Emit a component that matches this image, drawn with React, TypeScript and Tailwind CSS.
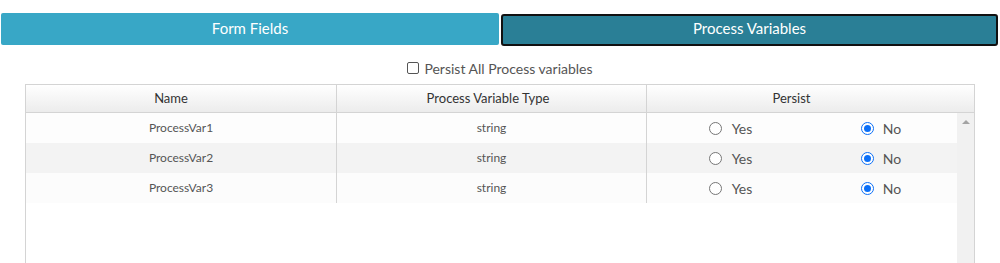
import { useState } from "react"

const rows = [
  { name: "ProcessVar1", type: "string" },
  { name: "ProcessVar2", type: "string" },
  { name: "ProcessVar3", type: "string" },
]

const rowBg = ["bg-[#fdfdfd]", "bg-[#f3f3f3]", "bg-[#fcfcfc]"]

function Radio({ checked }: { checked: boolean }) {
  return (
    <span
      className={
        checked
          ? "w-[13px] h-[13px] rounded-full border border-[#0b6ff7] bg-white flex items-center justify-center"
          : "w-[13px] h-[13px] rounded-full border border-[#767676] bg-white"
      }
    >
      {checked && <span className="w-[7px] h-[7px] rounded-full bg-[#0b6ff7]"></span>}
    </span>
  )
}

export default function App() {
  const [tab, setTab] = useState("vars")

  return (
    <div className="w-[1000px] h-[263px] bg-white overflow-hidden font-['Lato','Liberation_Sans',sans-serif]">
      {/* Tabs */}
      <div className="flex pt-[13px] gap-[2px] px-[1px]">
        <button
          onClick={() => setTab("fields")}
          className="w-[498px] h-[32px] pb-[1px] bg-[#38a7c6] text-white text-[15px] rounded-[2px] flex items-center justify-center"
        >
          Form Fields
        </button>
        <button
          onClick={() => setTab("vars")}
          className="w-[497px] h-[32px] mt-[1px] pb-[3px] bg-[#2a7f96] text-white text-[15px] rounded-[3px] border-2 border-[#111] flex items-center justify-center"
        >
          Process Variables
        </button>
      </div>

      {/* Persist all */}
      <div className="flex items-center justify-center h-[24px] mt-[10px] text-[14px] text-[#555]">
        <span className="w-[12px] h-[12px] border border-[#555] rounded-[2px] bg-white mr-[5px]"></span>
        Persist All Process variables
      </div>

      {/* Table */}
      <div className="ml-[25px] w-[950px] mt-[4px] border-l border-r border-t border-[#d4d4d4] h-[200px] flex flex-col">
        <div className="flex h-[28px] bg-gradient-to-b from-white to-[#ececec] border-b border-[#d4d4d4] text-[13px] text-[#333] shrink-0">
          <div className="w-[311px] pr-[20px] flex items-center justify-center border-r border-[#d4d4d4]">Name</div>
          <div className="w-[310px] pr-[7px] flex items-center justify-center border-r border-[#d4d4d4]">Process Variable Type</div>
          <div className="flex-1 pr-[38px] flex items-center justify-center">Persist</div>
        </div>
        <div className="flex flex-1">
          <div className="w-[931px]">
            {rows.map((r, i) => (
              <div key={r.name} className={`flex h-[30px] ${rowBg[i]} text-[12px] text-[#555]`}>
                <div className="w-[311px] flex items-center justify-center border-r border-[#d4d4d4]">{r.name}</div>
                <div className="w-[310px] flex items-center justify-center border-r border-[#d4d4d4]">{r.type}</div>
                <div className="flex-1 grid grid-cols-2 text-[14px]">
                  <label className="flex items-center justify-center gap-[10px] pl-[12px]">
                    <Radio checked={false} />
                    Yes
                  </label>
                  <label className="flex items-center justify-center gap-[9px] pl-[3px]">
                    <Radio checked={true} />
                    No
                  </label>
                </div>
              </div>
            ))}
          </div>
          <div className="w-[17px] bg-[#f1f1f1] flex justify-center pt-[7px]">
            <span className="w-0 h-0 border-l-[4px] border-r-[4px] border-b-[4px] border-l-transparent border-r-transparent border-b-[#a3a3a3]"></span>
          </div>
        </div>
      </div>
    </div>
  )
}
